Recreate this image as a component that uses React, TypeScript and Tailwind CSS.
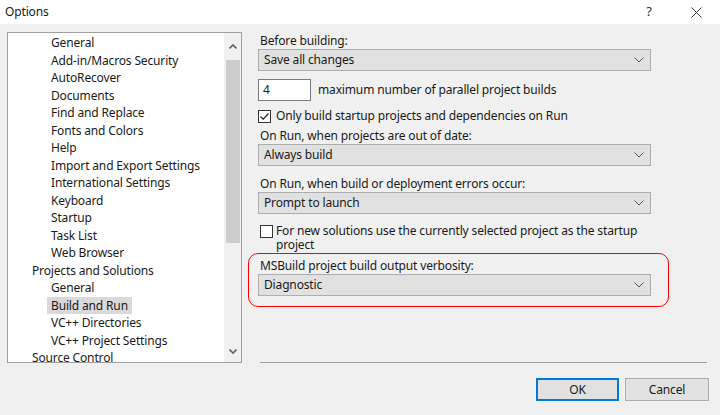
import React from "react";

const treeItems: { label: string; level: number; selected?: boolean }[] = [
  { label: "General", level: 2 },
  { label: "Add-in/Macros Security", level: 2 },
  { label: "AutoRecover", level: 2 },
  { label: "Documents", level: 2 },
  { label: "Find and Replace", level: 2 },
  { label: "Fonts and Colors", level: 2 },
  { label: "Help", level: 2 },
  { label: "Import and Export Settings", level: 2 },
  { label: "International Settings", level: 2 },
  { label: "Keyboard", level: 2 },
  { label: "Startup", level: 2 },
  { label: "Task List", level: 2 },
  { label: "Web Browser", level: 2 },
  { label: "Projects and Solutions", level: 1 },
  { label: "General", level: 2 },
  { label: "Build and Run", level: 2, selected: true },
  { label: "VC++ Directories", level: 2 },
  { label: "VC++ Project Settings", level: 2 },
  { label: "Source Control", level: 1 },
];

function Chevron() {
  return (
    <svg width="10" height="6" viewBox="0 0 10 6" className="shrink-0">
      <polyline points="0.5,0.5 5,5 9.5,0.5" fill="none" stroke="#555" strokeWidth="1" />
    </svg>
  );
}

function Select({ value }: { value: string }) {
  return (
    <div className="flex h-[22px] w-[393px] items-center justify-between border border-[#adadad] bg-[#e1e1e1] pl-[5px] pr-[6px]">
      <span>{value}</span>
      <Chevron />
    </div>
  );
}

function Checkbox({ checked }: { checked?: boolean }) {
  return (
    <div className="flex h-[13px] w-[13px] shrink-0 items-center justify-center border border-[#333] bg-white">
      {checked && (
        <svg width="11" height="11" viewBox="0 0 11 11">
          <polyline points="1.5,5.5 4.2,8.2 9.5,2.5" fill="none" stroke="#222" strokeWidth="1.2" />
        </svg>
      )}
    </div>
  );
}

export default function App() {
  return (
    <div
      className="flex h-[415px] w-[720px] flex-col bg-[#f0f0f0] text-[12px] tracking-[-0.15px] text-[#1a1a1a]"
      style={{ fontFamily: '"Noto Sans", "Open Sans", sans-serif' }}
    >
      {/* title bar */}
      <div className="flex h-6 shrink-0 items-center bg-white pl-[5px]">
        <span className="flex-1">Options</span>
        <span className="w-[40px] text-center text-[13px] text-[#333]">?</span>
        <span className="w-[22px]" />
        <svg width="11" height="11" viewBox="0 0 11 11" className="mr-[18px]">
          <path d="M0.5 0.5 L10.5 10.5 M10.5 0.5 L0.5 10.5" stroke="#333" strokeWidth="1" />
        </svg>
      </div>

      <div className="flex flex-1">
        {/* tree */}
        <div className="ml-[7px] mt-2 flex h-[331px] w-[235px] border border-[#a0a0a0] bg-white">
          <div className="flex-1 overflow-hidden pt-[1px]">
            {treeItems.map((item, i) => (
              <div
                key={i}
                className={`flex h-[17.5px] items-center ${item.level === 1 ? "pl-[20px]" : "pl-[39px]"}`}
              >
                <span
                  className={`whitespace-nowrap px-[4px] leading-[17.5px] ${item.selected ? "bg-[#d9d9d9]" : ""}`}
                >
                  {item.label}
                </span>
              </div>
            ))}
          </div>
          <div className="flex w-[17px] flex-col items-center bg-[#f0f0f0]">
            <div className="flex h-[27px] items-center justify-center">
              <svg width="8" height="5" viewBox="0 0 8 5">
                <polyline points="0.5,4.5 4,1 7.5,4.5" fill="none" stroke="#606060" strokeWidth="1.6" />
              </svg>
            </div>
            <div className="h-[183px] w-[14px] bg-[#cdcdcd]" />
            <div className="flex-1" />
            <div className="flex h-[22px] items-center justify-center">
              <svg width="8" height="5" viewBox="0 0 8 5">
                <polyline points="0.5,0.5 4,4 7.5,0.5" fill="none" stroke="#606060" strokeWidth="1.6" />
              </svg>
            </div>
          </div>
        </div>

        {/* settings */}
        <div className="ml-[16px] flex flex-1 flex-col">
          <div className="mt-[9px] h-4 pl-[2px] leading-4">Before building:</div>
          <Select value="Save all changes" />

          <div className="mt-2 flex items-center">
            <div className="flex h-[22px] w-[53px] items-center border border-[#7a7a7a] bg-white pl-[4px]">4</div>
            <span className="ml-[7px]">maximum number of parallel project builds</span>
          </div>

          <div className="mt-[7px] flex h-4 items-center">
            <Checkbox checked />
            <span className="ml-[5px] leading-4">Only build startup projects and dependencies on Run</span>
          </div>

          <div className="mt-[4px] h-4 pl-[2px] leading-4">On Run, when projects are out of date:</div>
          <Select value="Always build" />

          <div className="mt-[10px] h-4 pl-[2px] leading-4">On Run, when build or deployment errors occur:</div>
          <Select value="Prompt to launch" />

          <div className="mt-[10px] flex pl-[2px]">
            <div className="mt-[1px]">
              <Checkbox />
            </div>
            <span className="ml-[3px] w-[380px] leading-[14px]">
              For new solutions use the currently selected project as the startup project
            </span>
          </div>

          <div className="relative mt-[6px] w-[393px]">
            <div className="pointer-events-none absolute -bottom-[11px] -left-[10px] -right-[18px] -top-[5px] rounded-[10px] border-[1.5px] border-[#ff0000]" />
            <div className="h-4 pl-[2px] leading-4">MSBuild project build output verbosity:</div>
            <Select value="Diagnostic" />
          </div>

          <div className="flex-1" />
          <div className="mr-[13px] ml-[2px] h-px bg-[#a0a0a0]" />
          <div className="mb-[14px] mr-[11px] mt-[15px] flex justify-end gap-[6px]">
            <button className="h-[23px] w-[83px] border-2 border-[#0078d7] bg-[#e1e1e1]">OK</button>
            <button className="h-[23px] w-[84px] border border-[#adadad] bg-[#e1e1e1]">Cancel</button>
          </div>
        </div>
      </div>
    </div>
  );
}
